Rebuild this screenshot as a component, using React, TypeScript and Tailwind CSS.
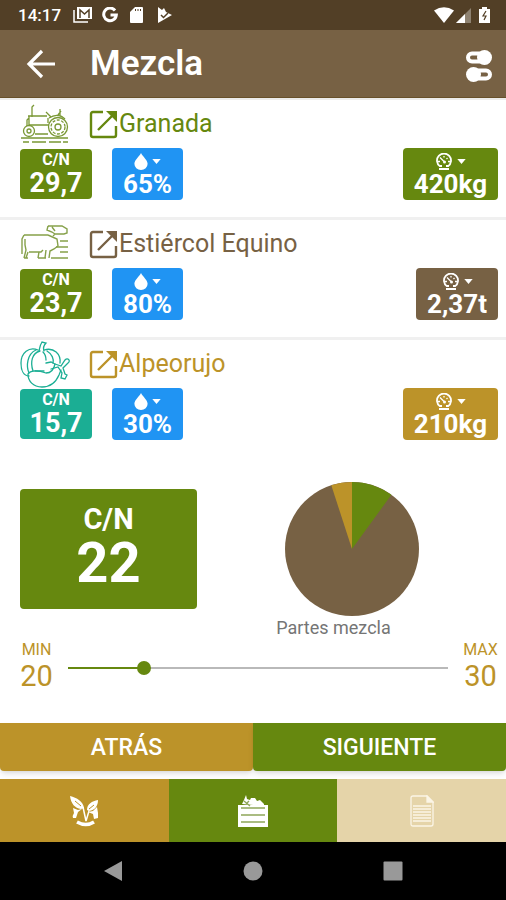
import React, { useState } from "react";

type Residue = {
  name: string;
  ratio: string;
  humidity: string;
  weight: string;
  icon: React.ReactNode;
  titleColor: string;
  ratioColor: string;
  weightColor: string;
};

function TractorIcon() {
  return (
    <svg viewBox="0 0 50 42" className="h-[42px] w-[50px]" fill="none" stroke="#7a9835" strokeWidth="1.3">
      <path d="M12 14V4l2-2M8 13h19M9 13v9M9 22h20M9 15l-2 2v6M15 31h13M28 15v5M26 9l5 5M40 6v7M38 12l3-4M29 15c6-4 12-3 16 1" />
      <circle cx="9" cy="28" r="5.5" />
      <circle cx="9" cy="28" r="2" />
      <circle cx="38" cy="24" r="9.5" />
      <circle cx="38" cy="24" r="7" strokeDasharray="3 1.5" />
      <circle cx="38" cy="24" r="3" />
      <path d="M1 35h47M3 39h6M12 39h14M29 39h12M43 39h5" />
    </svg>
  );
}

function CowIcon() {
  return (
    <svg viewBox="0 0 50 42" className="h-[42px] w-[50px]" fill="none" stroke="#86a14a" strokeWidth="1.4">
      <path d="M4 12h24M4 12l-2 4v15M5 16v6l1 5-2 8M28 12l9 4 1 7-4 3-4 2-1 7M8 29l-2 6M19 29l-1 6M26 27l-1 8M9 29h12l2-2M4 35h4M18 35h8" />
      <path d="M28 3h14l5 3v4l-3 1h-9l-2 2M28 3l-1 4 5 2 3 2M32 4l3 4M40 18h8M36 24h12M40 29h8M31 35h17" />
    </svg>
  );
}

function PumpkinIcon() {
  return (
    <svg viewBox="0 0 50 50" className="h-[50px] w-[50px]" fill="none" stroke="#1bae94" strokeWidth="1.3" strokeLinecap="round">
      <path d="M19 12c1-4 1-6 3-9l4 1c-3 3-3 5-2 8" />
      <path d="M18 11C9 7 1 14 1 24c0 8 3 13 8 13M24 11c10-3 17 4 16 13" />
      <path d="M20 12c-8 2-10 11-7 20M23 13c2 2 3 5 3 8M27 12c5 3 7 8 6 12M16 11C7 15 6 27 9 34M15 32h9" />
      <path d="M8 35c4-5 12-3 18-1 5 0 8-4 9-9l-4-2-5 1M8 35c0 7 5 13 14 13 9 0 14-5 17-12l2-5" />
      <path d="M35 25l6 2 4-6c3-3 6 1 3 3l-5 5 2 6 2 1-2 4-4-1 1-5-4-6-7 2" />
    </svg>
  );
}

function OpenIcon() {
  return (
    <svg viewBox="0 0 30 30" className="h-[30px] w-[30px]" fill="none" stroke="currentColor" strokeWidth="2.4" aria-hidden="true">
      <path d="M14 3H4q-2 0-2 2v21q0 2 2 2h21q2 0 2-2v-9M9 21L24 6" />
      <path d="M17 2h11v11l-4-4-3-3z" fill="currentColor" stroke="none" />
    </svg>
  );
}

function DropIcon() {
  return (
    <svg viewBox="0 0 14 18" className="h-[17px] w-[14px]" fill="currentColor">
      <path d="M7 0C5 4 0 7.500 0 11.500a7 6.500 0 0 0 14 0C14 7.500 9 4 7 0z" />
    </svg>
  );
}

function ScaleIcon() {
  return (
    <svg viewBox="0 0 18 17" className="h-[17px] w-[18px]" fill="none" stroke="currentColor" strokeWidth="1.8">
      <path d="M5 13.300A7 7 0 1 1 13 13.300M4 16h10M4 13h3M11 13h3" />
      <path d="M5 4.500l4 4M9 3v1.500M3 8.500h2M13 8.500h2M12.500 5l-1 1" strokeWidth="1.300" />
      <circle cx="9.500" cy="9" r="1.500" fill="currentColor" stroke="none" />
    </svg>
  );
}

function Caret() {
  return (
    <svg viewBox="0 0 10 6" className="h-[5px] w-[9px]" fill="currentColor">
      <path d="M0 0h10L5 6z" />
    </svg>
  );
}

function StatusBar() {
  return (
    <div className="flex h-[30px] items-center bg-[#523f26] pr-4 pl-[18px] text-white">
      <span className="text-[17px] leading-5 font-medium">14:17</span>
      <svg viewBox="0 0 20 16" className="ml-3 h-4 w-5" fill="none" stroke="currentColor">
        <path d="M1 3v12h14" strokeWidth="1.500" />
        <path d="M4 0h15v12H4z" fill="currentColor" stroke="none" />
        <path d="M7 11V3l4.500 4L16 3v8" stroke="#523f26" strokeWidth="1.500" />
      </svg>
      <svg viewBox="0 0 16 16" className="ml-[9px] h-4 w-4" fill="none" stroke="currentColor" strokeWidth="3">
        <path d="M13 3.500A6.300 6.300 0 1 0 14.300 8H8.500" />
      </svg>
      <svg viewBox="0 0 13 16" className="ml-3 h-4 w-[13px]">
        <path d="M5 0h7q1 0 1 1v14q0 1-1 1H1q-1 0-1-1V5z" fill="currentColor" />
        <path d="M5.500 2v2M8 2v2M10.500 2v2" stroke="#523f26" />
      </svg>
      <svg viewBox="0 0 15 16" className="ml-[14px] h-4 w-[15px]">
        <path d="M1 0l4 3 2-2 2 4 6 3L1 16z" fill="currentColor" />
        <path d="M4 8l2.500 2.500L11 6" stroke="#523f26" strokeWidth="1.500" fill="none" />
      </svg>
      <svg viewBox="0 0 20 16" className="ml-auto h-4 w-5" fill="currentColor">
        <path d="M0 3.500Q10-3 20 3.500L10 16z" />
      </svg>
      <svg viewBox="0 0 15 15" className="ml-[2px] h-[15px] w-[15px]" fill="currentColor">
        <path d="M15 0v15H0z" opacity=".35" />
        <path d="M9 6v9H0z" />
      </svg>
      <svg viewBox="0 0 11 16" className="ml-2 h-4 w-[11px]">
        <path d="M3 0h5v2h3v14H0V2h3z" fill="currentColor" />
        <path d="M7 4L4 9h3l-2 4" stroke="#523f26" strokeWidth="1.200" fill="none" />
      </svg>
    </div>
  );
}

function Header() {
  return (
    <header className="flex h-[68px] items-center border-b border-[#67502a] bg-[#776144] pr-[14px] pl-[26px] text-white">
      <button type="button" aria-label="Volver">
        <svg viewBox="0 0 30 30" className="h-[30px] w-[30px]" fill="none" stroke="currentColor" strokeWidth="3.200">
          <path d="M29 15H3M16 2L3 15l13 13" />
        </svg>
      </button>
      <h1 className="ml-[34px] flex-1 text-[35px] leading-10 font-semibold">Mezcla</h1>
      <button type="button" aria-label="Ajustes">
        <svg viewBox="0 0 26 32" className="mt-1 h-8 w-[26px]" fill="none" stroke="currentColor" strokeWidth="4">
          <rect x="2" y="3.500" width="20" height="8" rx="4" />
          <rect x="4" y="20.500" width="20" height="8" rx="4" />
          <circle cx="18.500" cy="7.500" r="7.500" fill="currentColor" stroke="none" />
          <circle cx="7.500" cy="24.500" r="7.500" fill="currentColor" stroke="none" />
        </svg>
      </button>
    </header>
  );
}

function ResidueRow({ residue }: { residue: Residue }) {
  return (
    <li className="border-b-[3px] border-[#f0f0f0] pr-2 pb-[17px] pl-5 last:border-transparent">
      <div className="flex h-12 items-center">
        <div className="flex h-12 w-[50px] items-center">{residue.icon}</div>
        <a href="#" className={`ml-[19px] flex items-center text-[25px] leading-8 ${residue.titleColor}`}>
          <OpenIcon />
          {residue.name}
        </a>
      </div>
      <div className="flex items-center text-white">
        <div className={`flex h-[50px] w-[72px] flex-col items-center rounded pt-[2px] font-bold ${residue.ratioColor}`}>
          <span className="text-base leading-[18px]">C/N</span>
          <span className="text-[27px] leading-7">{residue.ratio}</span>
        </div>
        <button type="button" className="ml-5 flex h-[52px] w-[71px] flex-col items-center rounded bg-[#2094f3] pt-1">
          <span className="flex h-[18px] items-center gap-1">
            <DropIcon />
            <Caret />
          </span>
          <span className="text-[26px] leading-7 font-bold">{residue.humidity}</span>
        </button>
        <button
          type="button"
          className={`ml-auto flex h-[52px] flex-col items-center rounded px-[11px] pt-1 ${residue.weightColor}`}
        >
          <span className="flex h-[18px] items-center gap-1">
            <ScaleIcon />
            <Caret />
          </span>
          <span className="text-[26px] leading-7 font-bold">{residue.weight}</span>
        </button>
      </div>
    </li>
  );
}

function Summary() {
  return (
    <section className="flex pt-[29px] pl-5">
      <div className="flex h-[120px] w-[177px] flex-col items-center rounded bg-[#66880f] pt-[14px] font-bold text-white">
        <span className="text-[29px] leading-8">C/N</span>
        <span className="text-[56px] leading-[56px]">22</span>
      </div>
      <figure className="-mt-[7px] flex flex-1 flex-col items-center">
        <svg viewBox="0 0 134 134" className="h-[134px] w-[134px]" role="img" aria-label="Partes mezcla">
          <circle cx="67" cy="67" r="67" fill="#776144" />
          <path d="M67 67V0A67 67 0 0 1 106.400 12.800z" fill="#66880f" />
          <path d="M67 67L46.300 3.300A67 67 0 0 1 67 0z" fill="#bc9329" />
        </svg>
        <figcaption className="mr-9 text-lg leading-6 text-[#757575]">Partes mezcla</figcaption>
      </figure>
    </section>
  );
}

function RatioSlider() {
  const min = 20;
  const max = 30;
  const [value, setValue] = useState(22);
  const percent = ((value - min) / (max - min)) * 100;

  return (
    <section className="flex items-center pr-2 pl-5 text-[#bc9329]">
      <div className="flex w-[33px] flex-col items-center">
        <span className="text-base leading-5">MIN</span>
        <span className="text-[29px] leading-8">{min}</span>
      </div>
      <div className="mr-[15px] ml-[15px] grid flex-1 items-center pt-1">
        <div className="col-start-1 row-start-1 h-[2px] bg-[#b9b9b9]">
          <div className="h-[2px] bg-[#66880f]" style={{ width: `${percent}%` }} />
        </div>
        <input
          type="range"
          aria-label="C/N"
          min={min}
          max={max}
          value={value}
          onChange={(e) => setValue(Number(e.target.value))}
          className="col-start-1 row-start-1 -mx-[7px] h-[14px] appearance-none bg-transparent [&::-webkit-slider-thumb]:h-[14px] [&::-webkit-slider-thumb]:w-[14px] [&::-webkit-slider-thumb]:appearance-none [&::-webkit-slider-thumb]:rounded-full [&::-webkit-slider-thumb]:bg-[#66880f]"
        />
      </div>
      <div className="flex w-[35px] flex-col items-center">
        <span className="text-base leading-5">MAX</span>
        <span className="text-[29px] leading-8">{max}</span>
      </div>
    </section>
  );
}

function TabBar() {
  return (
    <nav className="grid h-[63px] grid-cols-3 text-white">
      <button type="button" aria-label="Compost" className="flex items-center justify-center bg-[#bc9329]">
        <svg viewBox="0 0 30 32" className="h-8 w-[30px]" fill="currentColor">
          <path d="M1 1c7 2 13 5 14 12l-3 1C6 13 2 9 1 1zM29 5c-6 1-11 4-11 10l2 1c6-1 9-5 9-11z" />
          <path d="M4 13l5 2 4-1-4 3-2 6H4q-1-2 1-5zM28 12l1 6v5l-4 1-1-5-5-2 5-1z" />
          <path d="M14 12l3 14 3-10M7 6l7 7M26 8l-7 7" stroke="currentColor" strokeWidth="1.500" fill="none" />
          <path d="M6 6l6 5M25 10l-5 4" stroke="#bc9329" strokeWidth="1" fill="none" />
          <path d="M8 27q9 5 17 0" stroke="currentColor" strokeWidth="3.500" fill="none" />
        </svg>
      </button>
      <button type="button" aria-label="Mezcla" className="flex items-center justify-center bg-[#66880f]">
        <svg viewBox="0 0 32 32" className="h-8 w-8" fill="currentColor">
          <path d="M1 10h30v22H1zM5 9l2-4 2-5 1 4 3 1 1-2 4 0 2 3 3-1 4 4v2z" />
          <path d="M4 13h24M4 20h24M4 27h24M7 6l6 5M12 6l-3 3" stroke="#8fa65a" strokeWidth="1.300" />
        </svg>
      </button>
      <button type="button" aria-label="Informe" className="flex items-center justify-center bg-[#e5d4a9]">
        <svg viewBox="0 0 24 32" className="h-8 w-6" fill="none" stroke="#fbf5e6" strokeWidth="1.300">
          <path d="M3 1h14l6 6v22q0 2-2 2H3q-2 0-2-2V3q0-2 2-2z" />
          <path d="M17 1v6h6z" fill="#fbf5e6" />
          <path d="M3 11h18M3 14h18M3 17h18M3 20h18M3 23h18M3 26h18" />
        </svg>
      </button>
    </nav>
  );
}

function SystemBar() {
  return (
    <div className="flex h-[58px] items-center justify-center gap-[120px] bg-black">
      <svg viewBox="0 0 20 20" className="h-5 w-5" fill="#999">
        <path d="M19 0v20L1 10z" />
      </svg>
      <svg viewBox="0 0 20 20" className="h-5 w-5" fill="#999">
        <circle cx="10" cy="10" r="9.500" />
      </svg>
      <svg viewBox="0 0 20 20" className="h-5 w-5" fill="#999">
        <rect x="0.500" y="0.500" width="19" height="19" rx="1" />
      </svg>
    </div>
  );
}

const residues: Residue[] = [
  {
    name: "Granada",
    ratio: "29,7",
    humidity: "65%",
    weight: "420kg",
    icon: <TractorIcon />,
    titleColor: "text-[#66880f]",
    ratioColor: "bg-[#66880f]",
    weightColor: "bg-[#66880f]",
  },
  {
    name: "Estiércol Equino",
    ratio: "23,7",
    humidity: "80%",
    weight: "2,37t",
    icon: <CowIcon />,
    titleColor: "text-[#776144]",
    ratioColor: "bg-[#66880f]",
    weightColor: "bg-[#776144]",
  },
  {
    name: "Alpeorujo",
    ratio: "15,7",
    humidity: "30%",
    weight: "210kg",
    icon: <PumpkinIcon />,
    titleColor: "text-[#bc9329]",
    ratioColor: "bg-[#1bae94]",
    weightColor: "bg-[#bc9329]",
  },
];

export default function App() {
  return (
    <div className="flex min-h-screen flex-col bg-white font-[Roboto,sans-serif]">
      <StatusBar />
      <Header />
      <main className="flex-1 border-t-2 border-[#ececec]">
        <ul>
          {residues.map((residue) => (
            <ResidueRow key={residue.name} residue={residue} />
          ))}
        </ul>
        <Summary />
        <RatioSlider />
      </main>
      <div className="mb-2 grid h-12 grid-cols-2 text-[23px] font-medium text-white">
        <button type="button" className="rounded-b bg-[#bc9329] pt-[2px] shadow-md">
          ATRÁS
        </button>
        <button type="button" className="rounded-b bg-[#66880f] pt-[2px] shadow-md">
          SIGUIENTE
        </button>
      </div>
      <TabBar />
      <SystemBar />
    </div>
  );
}
